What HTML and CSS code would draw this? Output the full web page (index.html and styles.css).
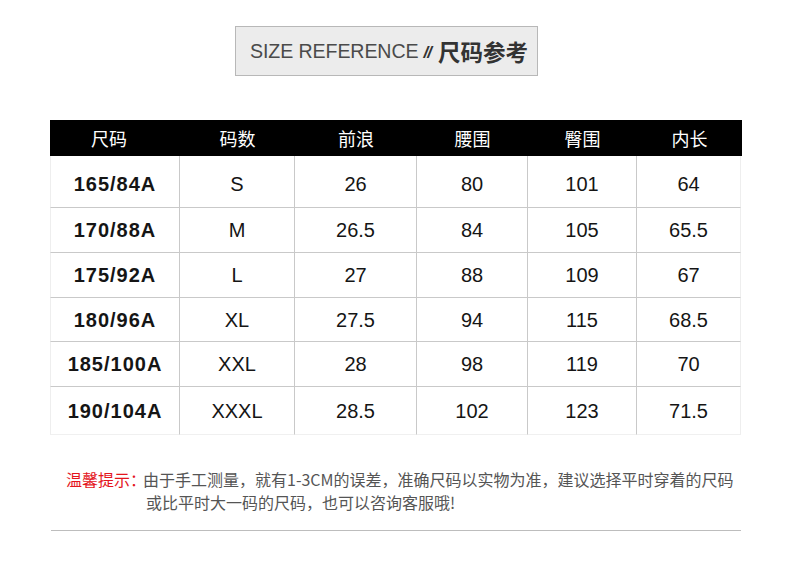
FILE: index.html
```html
<!DOCTYPE html>
<html lang="zh-CN">
<head>
<meta charset="utf-8">
<title>Size Reference</title>
<link rel="stylesheet" href="styles.css">
</head>
<body>
<div class="page">
  <div class="title">
    <span class="title-en">SIZE REFERENCE</span>
    <span class="title-sep">//</span>
    <span class="title-cn">尺码参考</span>
  </div>

  <div class="size-table">
    <div class="th first">尺码</div>
    <div class="th">码数</div>
    <div class="th">前浪</div>
    <div class="th">腰围</div>
    <div class="th">臀围</div>
    <div class="th last">内长</div>

    <div class="td first size top">165/84A</div><div class="td top">S</div><div class="td top">26</div><div class="td top">80</div><div class="td top">101</div><div class="td last top">64</div>
    <div class="td first size">170/88A</div><div class="td">M</div><div class="td">26.5</div><div class="td">84</div><div class="td">105</div><div class="td last">65.5</div>
    <div class="td first size">175/92A</div><div class="td">L</div><div class="td">27</div><div class="td">88</div><div class="td">109</div><div class="td last">67</div>
    <div class="td first size">180/96A</div><div class="td">XL</div><div class="td">27.5</div><div class="td">94</div><div class="td">115</div><div class="td last">68.5</div>
    <div class="td first size">185/100A</div><div class="td">XXL</div><div class="td">28</div><div class="td">98</div><div class="td">119</div><div class="td last">70</div>
    <div class="td first size bottom">190/104A</div><div class="td bottom">XXXL</div><div class="td bottom">28.5</div><div class="td bottom">102</div><div class="td bottom">123</div><div class="td last bottom">71.5</div>
  </div>

  <div class="note">
    <span class="note-label">温馨提示：</span>
    <div class="note-text">
      <div class="note-line">由于手工测量，就有1-3CM的误差，准确尺码以实物为准，建议选择平时穿着的尺码</div>
      <div class="note-line second">或比平时大一码的尺码，也可以咨询客服哦!</div>
    </div>
  </div>

  <div class="divider"></div>
</div>
</body>
</html>
```

FILE: styles.css
```css
* { box-sizing: border-box; }

html, body {
  margin: 0;
  padding: 0;
  background: #ffffff;
}

body {
  font-family: "Liberation Sans", "Noto Sans CJK SC", sans-serif;
  color: #111;
}

.page {
  width: 691px;
  margin-left: 50px;
  padding-top: 26px;
}

.title {
  margin-left: 185px;
  width: 303px;
  height: 50px;
  background: #ececec;
  border: 1px solid #b8b8b8;
  display: flex;
  align-items: center;
  padding-left: 14px;
  white-space: nowrap;
}

.title-en,
.title-sep,
.title-cn {
  line-height: 1;
}

.title-en {
  font-family: "Liberation Sans", sans-serif;
  font-size: 19.6px;
  color: #4a4a4a;
  letter-spacing: -0.1px;
  padding-top: 2px;
}

.title-sep {
  font-family: "Liberation Sans", sans-serif;
  font-style: italic;
  font-weight: bold;
  font-size: 17px;
  color: #333;
  margin-left: 5px;
  letter-spacing: -1px;
  padding-top: 2px;
}

.title-cn {
  font-family: "Noto Sans CJK SC", sans-serif;
  font-weight: 700;
  font-size: 22.5px;
  color: #333;
  margin-left: 7px;
}

.size-table {
  margin-top: 44px;
  display: grid;
  grid-template-columns: 130px 115px 122px 111px 109px 104px;
  grid-template-rows: 36px 52px 45px 45px 44px 45px 48px;
}

.th {
  background: #000;
  color: #fff;
  font-family: "Noto Sans CJK SC", sans-serif;
  font-size: 18px;
  display: flex;
  align-items: center;
  justify-content: center;
  padding-bottom: 1px;
}

.th.first { padding-right: 12px; }
.th.last { width: 105px; }

.td {
  display: flex;
  align-items: center;
  justify-content: center;
  font-size: 20px;
  color: #151515;
  border-right: 1px solid #c9c9c9;
  border-bottom: 1px solid #c9c9c9;
  padding-top: 1px;
}

.td.top { padding-top: 5px; }
.td.first { border-left: 1px solid #eeeeee; }
.td.last { border-right: 1px solid #eeeeee; }
.td.bottom { border-bottom: 1px solid #f0f0f0; }

.td.size {
  font-weight: bold;
  letter-spacing: 1px;
}

.note {
  margin-top: 33px;
  display: flex;
  padding-left: 16px;
  font-family: "Noto Sans CJK SC", sans-serif;
  font-size: 16px;
  line-height: 23px;
}

.note-label {
  color: #e4151d;
  white-space: nowrap;
  margin-right: -3px;
}

.note-text {
  color: #555;
  white-space: nowrap;
}

.note-line.second { padding-left: 3px; }

.divider {
  margin-top: 16px;
  margin-left: 1px;
  height: 0;
  border-top: 1px solid #bdbdbd;
}
```
